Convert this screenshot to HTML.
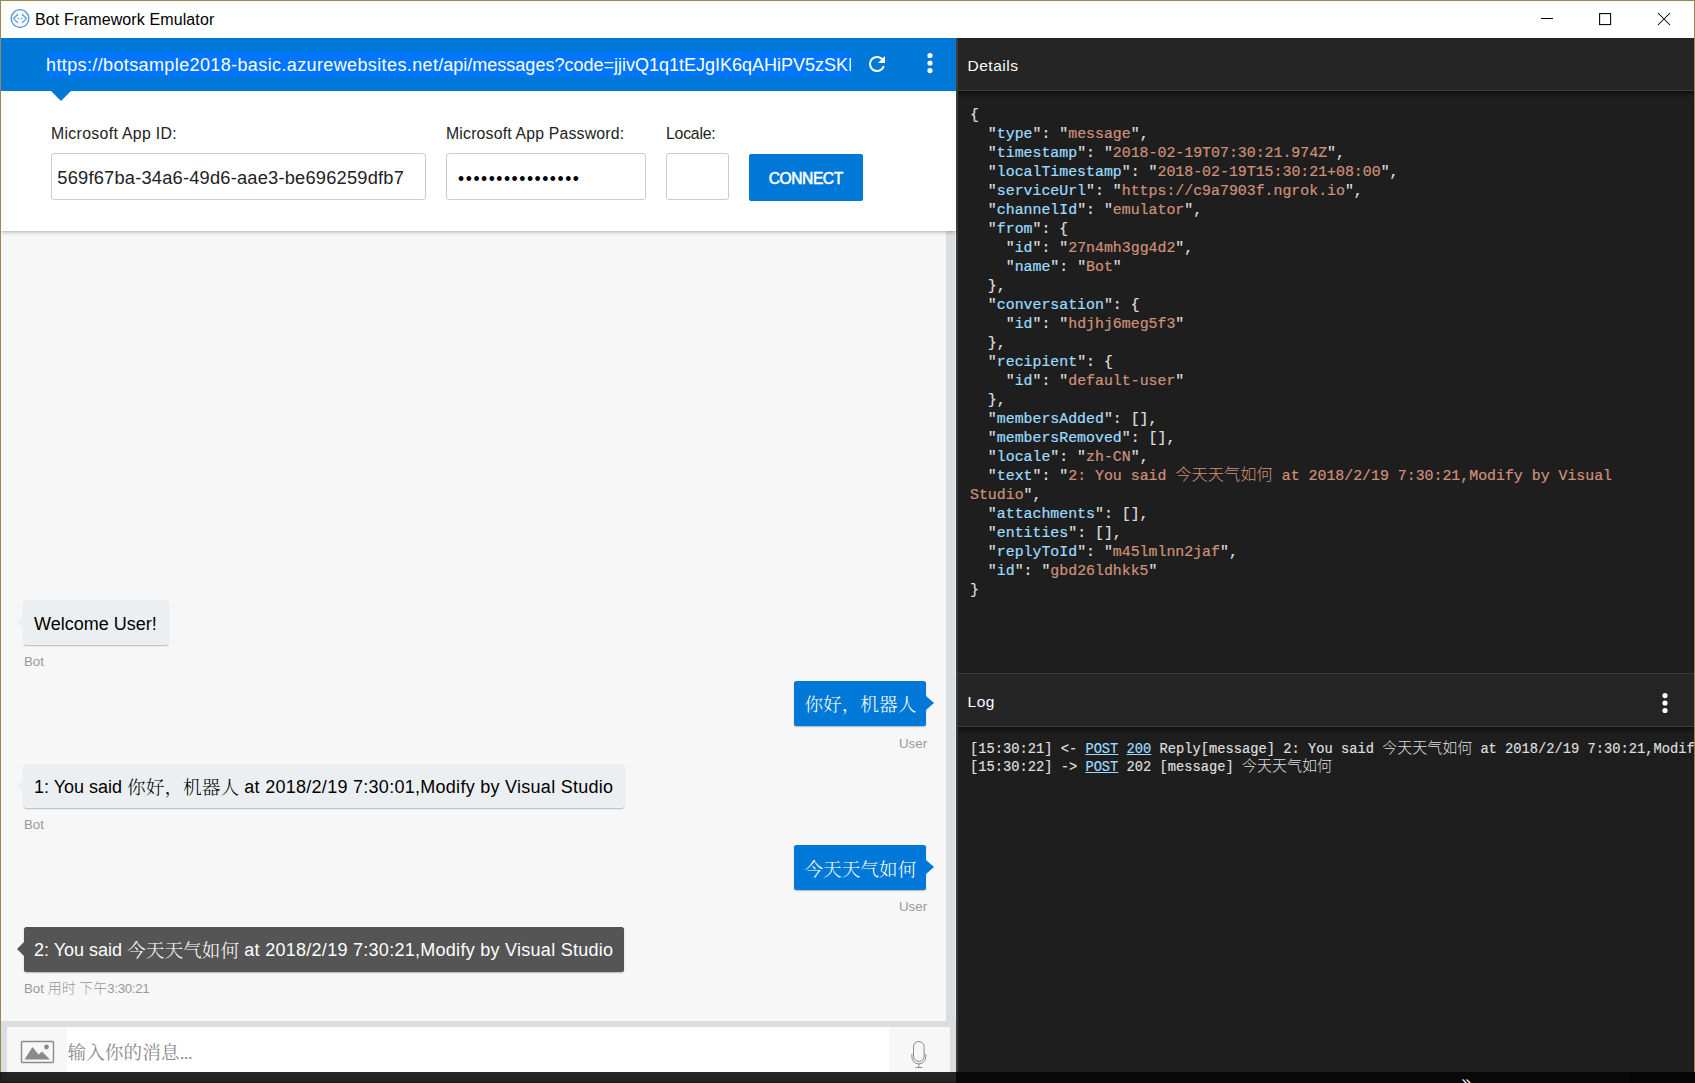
<!DOCTYPE html>
<html lang="zh-CN">
<head>
<meta charset="utf-8">
<title>Bot Framework Emulator</title>
<style>
*{box-sizing:border-box;margin:0;padding:0}
html,body{width:1695px;height:1083px;overflow:hidden;background:#fff}
body{position:relative;font-family:"Liberation Sans","Noto Sans CJK SC",sans-serif;color:#000}
.abs{position:absolute}
.t{position:absolute;white-space:nowrap;line-height:1}
.serifcjk{font-family:"Liberation Sans","Noto Serif CJK SC",serif}
/* window frame */
#frame-top{left:0;top:0;width:1695px;height:1px;background:#9b8655}
#frame-left{left:0;top:0;width:1px;height:1072px;background:#9b8655}
#frame-right{left:1694px;top:0;width:1px;height:1072px;background:#9b8655}
#titlebar{left:1px;top:1px;width:1693px;height:37px;background:#fff}
/* address bar */
#addr{left:1px;top:38px;width:955px;height:53px;background:#0078d7}
#sel{left:46px;top:52px;width:805px;height:25px;background:#0075ff}
#tri{left:51px;top:91px;width:0;height:0;border-left:10px solid transparent;border-right:10px solid transparent;border-top:10px solid #0078d7}
/* settings */
#settings{left:1px;top:91px;width:955px;height:140px;background:#fff;box-shadow:0 1px 4px rgba(0,0,0,.3)}
.inp{position:absolute;background:#fff;border:1px solid #ccc;border-radius:3px;height:47px;top:153px}
.lbl{font-size:15.8px;color:#222}
#connect{left:749px;top:154px;width:114px;height:47px;background:#0078d7;border-radius:2px}
/* chat */
#chat{left:1px;top:231px;width:945px;height:790px;background:#f7f7f7}
#chatbar{left:946px;top:231px;width:10px;height:841px;background:#dbdee1;border-right:1px solid #eceef0}
.bub{position:absolute;height:44.7px;border-radius:2.5px;box-shadow:0 1px 1.5px rgba(0,0,0,.26)}
.bot{background:#eceff1}
.usr{background:#0078d7}
.selb{background:#555}
.arrL{position:absolute;width:0;height:0;border-top:7px solid transparent;border-bottom:7px solid transparent;border-right:7.4px solid #eceff1}
.arrR{position:absolute;width:0;height:0;border-top:7.8px solid transparent;border-bottom:7.8px solid transparent;border-left:8px solid #0078d7}
.msg{font-size:18px;color:#000}
.cj{line-height:0}
.msg .cj{font-size:18.67px;position:relative;top:1px;font-weight:300}
.msg .ls{letter-spacing:.277px}
.from{font-size:13.3px;color:#999}
/* console */
#cons-border{left:1px;top:1021px;width:955px;height:51px;background:#dbdee1}
#cons{left:7px;top:1027px;width:943px;height:45px;background:#fff}
#upl{left:7px;top:1027px;width:60px;height:45px;background:#f7f7f7}
#mic{left:889px;top:1027px;width:61px;height:45px;background:#f7f7f7}
/* right panels */
#split{left:956px;top:38px;width:2px;height:1034px;background:#3c3c3c}
#dethead{left:958px;top:38px;width:736px;height:53px;background:#252526;border-bottom:1px solid #3f3f3f}
#detbody{left:958px;top:91px;width:736px;height:582px;background:#1e1e1e}
#loghead{left:958px;top:673px;width:736px;height:54px;background:#252526;border-top:1px solid #3c3c3c;border-bottom:1px solid #3f3f3f}
.shd{left:958px;width:736px;height:7px;background:linear-gradient(#0e0e0e,#171717 40%,#1e1e1e)}
#logbody{left:958px;top:727px;width:736px;height:345px;background:#1e1e1e;overflow:hidden}
#bottom-l{left:0;top:1072px;width:956px;height:11px;background:#232323}
#bottom-r{left:956px;top:1072px;width:739px;height:11px;background:#090909}
.ph{font-size:15.5px;color:#fff;letter-spacing:.52px}
pre{position:absolute;font-family:"Liberation Mono","Noto Sans CJK SC",monospace;white-space:pre;margin:0}
#json{left:970px;top:106px;font-size:14.897px;line-height:19px;color:#dedede;-webkit-text-stroke-width:.22px}
#json .cj{font-size:16.26px;font-weight:300;-webkit-text-stroke-width:0}
#log .cj{font-size:15px;font-weight:300;-webkit-text-stroke-width:0}
#json .k{color:#9cdcfe}
#json .s{color:#ce9178}
#log{left:970px;top:739px;font-size:13.748px;line-height:17.9px;color:#dedede;-webkit-text-stroke-width:.2px}
#log u{color:#9cdcfe}
</style>
</head>
<body>
<div class="abs" id="titlebar"></div>
<div class="abs" id="chat"></div>
<div class="abs" id="chatbar"></div>
<div class="abs" id="settings"></div>
<div class="abs" id="addr"></div>
<div class="abs" id="tri"></div>
<div class="abs" id="sel"></div>
<div class="abs" id="cons-border"></div>
<div class="abs" id="cons"></div>
<div class="abs" id="upl"></div>
<div class="abs" id="mic"></div>
<div class="abs" id="split"></div>
<div class="abs" id="dethead"></div>
<div class="abs" id="detbody"></div>
<div class="abs" id="loghead"></div>
<div class="abs" id="logbody"></div>
<div class="abs shd" style="top:91px"></div>
<div class="abs shd" style="top:727px"></div>
<div class="abs" id="bottom-l"></div>
<div class="abs" id="bottom-r"></div>
<div class="abs" style="left:7px;top:1072px;width:949px;height:5px;background:#262626"></div>
<div class="abs" style="left:0;top:1082px;width:956px;height:1px;background:#1a1711"></div>
<div class="abs" style="left:0;top:1072px;width:1px;height:11px;background:#1d1a11"></div>
<div class="abs" style="left:1630px;top:1072px;width:65px;height:11px;background:#050505"></div>
<div class="abs" id="frame-top"></div>
<div class="abs" id="frame-left"></div>
<div class="abs" id="frame-right"></div>
<!-- title bar -->
<svg class="abs" style="left:9px;top:8px" width="22" height="22" viewBox="0 0 22 22"><circle cx="11" cy="10.6" r="8.9" fill="#f4f8fc" stroke="#4f96d6" stroke-width="1.3"/><path d="M9 6.3 L4.5 10.6 L9 14.9 M13 6.3 L17.5 10.6 L13 14.9" fill="none" stroke="#4f96d6" stroke-width="1.2"/><circle cx="9.4" cy="10.6" r="0.75" fill="#4f96d6"/><circle cx="12.6" cy="10.6" r="0.75" fill="#4f96d6"/></svg>
<div class="t" id="title" style="left:35px;top:12px;font-size:16px;letter-spacing:.11px">Bot Framework Emulator</div>
<svg class="abs" style="left:1535px;top:8px" width="150" height="24" viewBox="0 0 150 24"><path d="M6 10.5 H18" stroke="#000" stroke-width="1.05" fill="none"/><rect x="64.6" y="5.6" width="11" height="11" fill="none" stroke="#000" stroke-width="1.05"/><path d="M123 5 L135 17 M135 5 L123 17" stroke="#000" stroke-width="1.05" fill="none"/></svg>
<!-- address bar -->
<div class="abs" style="left:46px;top:52px;width:805px;height:25px;overflow:hidden"><div class="t" id="url" style="left:0;top:4.3px;font-size:18px;color:#fff"><span style="letter-spacing:.38px">https://botsample2018-basic.azurewebsites.net</span>/api/messages?code=jjivQ1q1tEJgIK6qAHiPV5zSKE</div></div>
<svg class="abs" style="left:865.4px;top:51.8px" width="24" height="24" viewBox="0 0 24 24"><path fill="#fff" d="M17.65 6.35A7.96 7.96 0 0 0 12 4a8 8 0 1 0 7.73 10h-2.08A6 6 0 1 1 12 6c1.66 0 3.14.69 4.22 1.78L13 11h7V4l-2.35 2.35z"/></svg>
<svg class="abs" style="left:918px;top:51px" width="24" height="24" viewBox="0 0 24 24"><circle cx="12" cy="4.5" r="2.6" fill="#fff"/><circle cx="12" cy="12" r="2.6" fill="#fff"/><circle cx="12" cy="19.6" r="2.6" fill="#fff"/></svg>
<!-- settings -->
<div class="t lbl" id="l1" style="left:51px;top:125.6px;letter-spacing:.34px">Microsoft App ID:</div>
<div class="t lbl" id="l2" style="left:446px;top:125.6px;letter-spacing:.19px">Microsoft App Password:</div>
<div class="t lbl" id="l3" style="left:666px;top:125.6px;letter-spacing:-.2px">Locale:</div>
<div class="inp" style="left:51px;width:375px"></div>
<div class="inp" style="left:446px;width:200px"></div>
<div class="inp" style="left:666px;width:63px"></div>
<div class="t" id="appid" style="left:57.3px;top:168.7px;font-size:18.3px;color:#222;letter-spacing:.2px">569f67ba-34a6-49d6-aae3-be696259dfb7</div>
<div class="t" id="pwd" style="left:458.1px;top:171px;font-size:17.5px;color:#000;letter-spacing:1.52px">••••••••••••••••</div>
<div class="abs" id="connect"></div>
<div class="t" id="ctext" style="left:768.8px;top:171.1px;font-size:15.6px;color:#fff;-webkit-text-stroke:.55px #fff;letter-spacing:-.45px">CONNECT</div>
<!-- chat -->
<div class="bub bot" style="left:24px;top:600.2px;width:144.2px"></div><div class="arrL" style="left:16.6px;top:615.2px"></div>
<div class="t msg" id="m1" style="left:34px;top:615px">Welcome User!</div>
<div class="t from" id="f1" style="left:24px;top:654.7px">Bot</div>

<div class="bub usr" style="left:794px;top:680.9px;width:132px"></div><div class="arrR" style="left:926px;top:695.7px"></div>
<div class="t msg serifcjk" id="m2" style="left:804.4px;top:695px;color:#fff"><span class="cj">你好，机器人</span></div>
<div class="t from" id="f2" style="left:899px;top:736.6px">User</div>

<div class="bub bot" style="left:24px;top:763.5px;width:600px"></div><div class="arrL" style="left:16.6px;top:778.5px"></div>
<div class="t msg serifcjk" id="m3" style="left:34px;top:777.6px">1: You said <span class="cj">你好，机器人</span><span class="ls"> at 2018/2/19 7:30:01,Modify by Visual Studio</span></div>
<div class="t from" id="f3" style="left:24px;top:817.7px">Bot</div>

<div class="bub usr" style="left:794px;top:845.1px;width:132px"></div><div class="arrR" style="left:926px;top:859.7px"></div>
<div class="t msg serifcjk" id="m4" style="left:804.4px;top:859.6px;color:#fff"><span class="cj">今天天气如何</span></div>
<div class="t from" id="f4" style="left:899px;top:899.6px">User</div>

<div class="bub selb" style="left:24px;top:927.1px;width:600px;height:44.5px"></div><div class="arrL" style="left:16.6px;top:942px;border-right-color:#555"></div>
<div class="t msg serifcjk" id="m5" style="left:34px;top:941px;color:#fff">2: You said <span class="cj">今天天气如何</span><span class="ls"> at 2018/2/19 7:30:21,Modify by Visual Studio</span></div>
<div class="t from" id="f5" style="left:24px;top:981.7px">Bot <span class="cj" style="font-size:14px;font-weight:300">用时</span> <span class="cj" style="font-size:14px;font-weight:300">下午</span><span style="letter-spacing:-.35px">3:30:21</span></div>
<!-- console -->
<svg class="abs" style="left:20px;top:1040px" width="36" height="24" viewBox="0 0 36 24"><rect x="1.5" y="1.5" width="32" height="21" rx="1" fill="none" stroke="#8a8a8a" stroke-width="1.4"/><path d="M4.5 19.5 L12.5 7 L18.5 14.5 L22 11.5 L30 19.5 Z" fill="#8a8a8a"/><circle cx="26.5" cy="7" r="2.4" fill="#8a8a8a"/></svg>
<div class="t serifcjk" id="ph" style="left:67.5px;top:1044.3px;font-size:18.67px;color:#8b8b8b">输入你的消息<span style="letter-spacing:-1px">...</span></div>
<svg class="abs" style="left:908px;top:1038px" width="22" height="32" viewBox="0 0 22 32"><rect x="5.5" y="3.5" width="10.6" height="20" rx="5.3" fill="none" stroke="#8a8a8a" stroke-width="1"/><path d="M3.9 16 V19 A6.9 6.9 0 0 0 17.7 19 V16 M10.8 25.9 V29.5 M7.4 29.5 H14.2" fill="none" stroke="#8a8a8a" stroke-width="1"/></svg>
<!-- right -->
<div class="t ph" id="hd" style="left:967.5px;top:58px">Details</div>
<div class="t ph" id="hl" style="left:967.5px;top:693.9px">Log</div>
<svg class="abs" style="left:1653px;top:690px" width="24" height="26" viewBox="0 0 24 26"><circle cx="12" cy="5.6" r="2.6" fill="#fff"/><circle cx="12" cy="13" r="2.6" fill="#fff"/><circle cx="12" cy="20.5" r="2.6" fill="#fff"/></svg>
<pre id="json">{
  "<span class="k">type</span>": "<span class="s">message</span>",
  "<span class="k">timestamp</span>": "<span class="s">2018-02-19T07:30:21.974Z</span>",
  "<span class="k">localTimestamp</span>": "<span class="s">2018-02-19T15:30:21+08:00</span>",
  "<span class="k">serviceUrl</span>": "<span class="s">https://c9a7903f.ngrok.io</span>",
  "<span class="k">channelId</span>": "<span class="s">emulator</span>",
  "<span class="k">from</span>": {
    "<span class="k">id</span>": "<span class="s">27n4mh3gg4d2</span>",
    "<span class="k">name</span>": "<span class="s">Bot</span>"
  },
  "<span class="k">conversation</span>": {
    "<span class="k">id</span>": "<span class="s">hdjhj6meg5f3</span>"
  },
  "<span class="k">recipient</span>": {
    "<span class="k">id</span>": "<span class="s">default-user</span>"
  },
  "<span class="k">membersAdded</span>": [],
  "<span class="k">membersRemoved</span>": [],
  "<span class="k">locale</span>": "<span class="s">zh-CN</span>",
  "<span class="k">text</span>": "<span class="s">2: You said <span class="cj">今天天气如何</span> at 2018/2/19 7:30:21,Modify by Visual</span>
<span class="s">Studio</span>",
  "<span class="k">attachments</span>": [],
  "<span class="k">entities</span>": [],
  "<span class="k">replyToId</span>": "<span class="s">m45lmlnn2jaf</span>",
  "<span class="k">id</span>": "<span class="s">gbd26ldhkk5</span>"
}</pre>
<div class="abs" style="left:958px;top:727px;width:736px;height:345px;overflow:hidden"><pre id="log" style="left:12px;top:14px">[15:30:21] &lt;- <u>POST</u> <u>200</u> Reply[message] 2: You said <span class="cj">今天天气如何</span> at 2018/2/19 7:30:21,Modify by Visual Studio
[15:30:22] -&gt; <u>POST</u> 202 [message] <span class="cj">今天天气如何</span></pre></div>
<div class="abs" style="left:1455px;top:1072px;width:30px;height:11px;overflow:hidden"><div class="t" style="left:6.5px;top:1px;font-size:17px;color:#fff">»</div></div>

</body>
</html>
